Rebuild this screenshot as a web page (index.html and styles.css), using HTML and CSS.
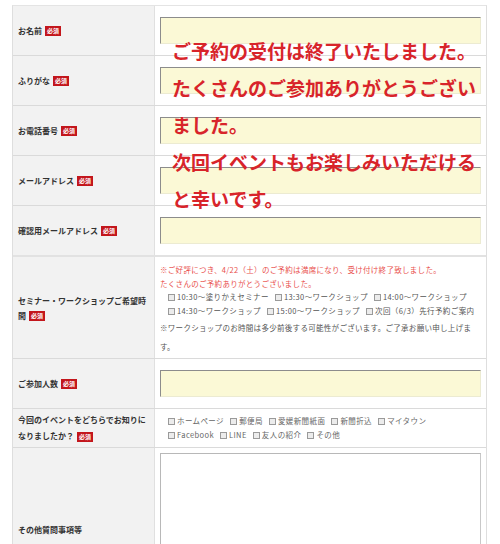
FILE: index.html
```html
<!DOCTYPE html>
<html lang="ja">
<head>
<meta charset="utf-8">
<title>Form</title>
<link rel="stylesheet" href="styles.css">
</head>
<body>
<div class="page">
  <div class="form">
    <div class="row">
      <div class="label"><span class="lt">お名前<span class="req">必須</span></span></div>
      <div class="field"><div class="input"></div></div>
    </div>
    <div class="row">
      <div class="label"><span class="lt">ふりがな<span class="req">必須</span></span></div>
      <div class="field"><div class="input"></div></div>
    </div>
    <div class="row">
      <div class="label"><span class="lt">お電話番号<span class="req">必須</span></span></div>
      <div class="field"><div class="input"></div></div>
    </div>
    <div class="row">
      <div class="label"><span class="lt">メールアドレス<span class="req">必須</span></span></div>
      <div class="field"><div class="input"></div></div>
    </div>
    <div class="row row-sep">
      <div class="label"><span class="lt">確認用メールアドレス<span class="req">必須</span></span></div>
      <div class="field"><div class="input"></div></div>
    </div>
    <div class="row">
      <div class="label"><span class="lt lt-15">セミナー・ワークショップご希望時間<span class="req">必須</span></span></div>
      <div class="field field-seminar">
        <p class="red">※ご好評につき、4/22（土）のご予約は満席になり、受け付け終了致しました。<br>たくさんのご予約ありがとうございました。</p>
        <div class="checks">
          <span class="chk"><span class="box"></span>10:30〜塗りかえセミナー</span>
          <span class="chk"><span class="box"></span>13:30〜ワークショップ</span>
          <span class="chk"><span class="box"></span>14:00〜ワークショップ</span>
          <span class="chk"><span class="box"></span>14:30〜ワークショップ</span>
          <span class="chk"><span class="box"></span>15:00〜ワークショップ</span>
          <span class="chk"><span class="box"></span>次回（6/3）先行予約ご案内</span>
        </div>
        <p class="note">※ワークショップのお時間は多少前後する可能性がございます。ご了承お願い申し上げます。</p>
      </div>
    </div>
    <div class="row">
      <div class="label"><span class="lt">ご参加人数<span class="req">必須</span></span></div>
      <div class="field"><div class="input"></div></div>
    </div>
    <div class="row">
      <div class="label"><span class="lt lt-16">今回のイベントをどちらでお知りになりましたか？<span class="req">必須</span></span></div>
      <div class="field field-checks">
        <div class="checks">
          <span class="chk"><span class="box"></span>ホームページ</span>
          <span class="chk"><span class="box"></span>郵便局</span>
          <span class="chk"><span class="box"></span>愛媛新聞紙面</span>
          <span class="chk"><span class="box"></span>新聞折込</span>
          <span class="chk"><span class="box"></span>マイタウン</span>
          <br>
          <span class="chk"><span class="box"></span>Facebook</span>
          <span class="chk"><span class="box"></span>LINE</span>
          <span class="chk"><span class="box"></span>友人の紹介</span>
          <span class="chk"><span class="box"></span>その他</span>
        </div>
      </div>
    </div>
    <div class="row">
      <div class="label"><span class="lt">その他質問事項等</span></div>
      <div class="field field-area"><div class="textarea"></div></div>
    </div>
  </div>
  <div class="notice">ご予約の受付は終了いたしました。たくさんのご参加ありがとうございました。<br>次回イベントもお楽しみいただけると幸いです。</div>
</div>
</body>
</html>
```
FILE: styles.css
```css
* { box-sizing: border-box; }
html, body {
  margin: 0;
  padding: 0;
  background: #fff;
  font-family: "Noto Sans CJK JP", "Noto Sans", sans-serif;
  overflow: hidden;
}
.page {
  position: relative;
  width: 500px;
  height: 544px;
  overflow: hidden;
}
.form {
  margin: 5px 0 0 12px;
  width: 475px;
  border-top: 1px solid #e4e4e4;
  border-left: 1px solid #dedede;
  border-right: 1px solid #dedede;
}
.row {
  display: grid;
  grid-template-columns: 142px 331px;
  border-bottom: 1px solid #dadada;
}
.row-sep {
  border-bottom: 2px solid #e2e2e2;
}
.label {
  background: #f2f2f2;
  border-right: 1px solid #e0e0e0;
  padding: 0 5px 0 5px;
  display: flex;
  align-items: center;
  font-size: 8px;
  font-weight: 700;
  color: #333;
}
.lt {
  display: block;
  line-height: 12px;
}
.lt-15 { line-height: 15px; }
.lt-16 { line-height: 16px; }
.req {
  display: inline-block;
  background: #c3161c;
  color: #fff;
  font-size: 6px;
  font-weight: 700;
  line-height: 8px;
  padding: 1px 2px;
  margin-left: 3px;
  vertical-align: middle;
}
.field {
  padding: 11px 5px;
}
.input {
  height: 27px;
  width: 321px;
  background: #fbf9d6;
  border: 1px solid;
  border-color: #8c8c8c #ecebd2 #ecebd2 #8c8c8c;
}
.field-seminar {
  padding: 6px 5px 2px;
  font-size: 7.5px;
  letter-spacing: 0.3px;
  color: #555;
}
.red {
  margin: 0;
  color: #e9504d;
  line-height: 13.5px;
}
.checks {
  padding-left: 8px;
  line-height: 14px;
  font-size: 7.5px;
  letter-spacing: 0.4px;
  color: #555;
}
.chk {
  margin-right: 4px;
  white-space: nowrap;
}
.box {
  display: inline-block;
  width: 7px;
  height: 7px;
  border: 1px solid #9a9a9a;
  background: #ececec;
  margin-right: 2px;
  vertical-align: -1px;
}
.note {
  margin: 0;
  line-height: 19px;
}
.field-checks {
  padding: 5px 5px 5px;
}
.field-checks .checks { color: #666; }
.field-area {
  padding: 5px 5px 5px;
}
.textarea {
  width: 321px;
  height: 154px;
  background: #fff;
  border: 1px solid;
  border-color: #b8b8b8 #c8c8c8 #c8c8c8 #b8b8b8;
}
.notice {
  position: absolute;
  left: 172px;
  top: 32px;
  width: 312px;
  font-size: 19px;
  font-weight: 700;
  line-height: 37px;
  color: #d8242a;
}
```
